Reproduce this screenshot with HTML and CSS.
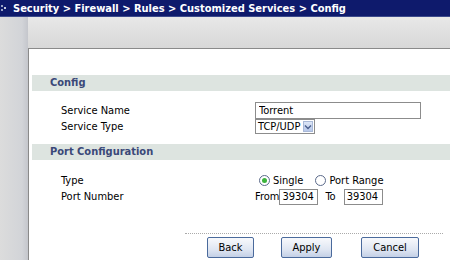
FILE: index.html
```html
<!DOCTYPE html>
<html lang="en">
<head>
  <title>Customized Services - Config</title>
  <meta charset="UTF-8">
  <link rel="stylesheet" href="styles.css">
</head>
<body>
  <div class="topbar">
    <svg class="crumb-icon" width="8" height="10" viewBox="0 0 8 10">
      <rect x="1" y="2" width="2" height="2" fill="#9aa3c8"/>
      <rect x="4" y="4" width="2" height="2" fill="#c9cde0"/>
      <rect x="1" y="6" width="2" height="2" fill="#9aa3c8"/>
    </svg>
    <span>Security &gt; Firewall &gt; Rules &gt; Customized Services &gt; Config</span>
  </div>

  <div class="frame">
    <div class="panel">
      <div class="band">Config</div>
      <div class="rows">
        <div class="row tall">
          <label>Service Name</label>
          <input type="text" class="text-name" value="Torrent">
        </div>
        <div class="row">
          <label>Service Type</label>
          <div class="select">
            <span>TCP/UDP</span>
            <span class="arrow">
              <svg width="8" height="6" viewBox="0 0 8 6"><path d="M1 1.5 L4 4.5 L7 1.5" fill="none" stroke="#4b5f8c" stroke-width="1.4"/></svg>
            </span>
          </div>
        </div>
      </div>

      <div class="band">Port Configuration</div>
      <div class="rows port">
        <div class="row">
          <label>Type</label>
          <div class="radios">
            <span class="radio on"></span><span class="radio-text">Single</span>
            <span class="radio"></span><span>Port Range</span>
          </div>
        </div>
        <div class="row tall">
          <label>Port Number</label>
          <div class="ports">
            <span>From</span><input type="text" class="port-box" value="39304">
            <span class="to">To</span><input type="text" class="port-box" value="39304">
          </div>
        </div>
      </div>

      <div class="actions">
        <button class="btn back">Back</button>
        <button class="btn apply">Apply</button>
        <button class="btn cancel">Cancel</button>
      </div>
    </div>
  </div>
</body>
</html>
```

FILE: styles.css
```css
body {
  margin: 0;
  font-family: "DejaVu Sans Condensed", "DejaVu Sans", sans-serif;
  font-size: 11px;
  color: #000;
  width: 450px;
  height: 260px;
  overflow: hidden;
}

.topbar {
  height: 16px;
  background: #0e1a6c;
  border-bottom: 1px solid #3c4a8c;
  color: #fff;
  font-weight: bold;
  font-size: 11px;
  display: flex;
  align-items: center;
  white-space: nowrap;
}

.crumb-icon {
  margin: 0 5px 0 0;
}

.frame {
  height: 243px;
  padding: 31px 0 0 28px;
  box-sizing: border-box;
  background:
    linear-gradient(to right, #dcdcdc 0, #d2d4d8 22px, #c4c6cc 28px, transparent 28px),
    linear-gradient(to bottom, #e8e8e8, #d8d8d8 30px);
}

.panel {
  background: #fff;
  border-top: 1px solid #8a8a8a;
  border-left: 1px solid #8a8a8a;
  height: 100%;
  padding-top: 26px;
  box-sizing: border-box;
}

.band {
  margin-left: 3px;
  height: 16px;
  line-height: 16px;
  background: #dde4e0;
  color: #3a4878;
  font-weight: bold;
  padding-left: 18px;
}

.rows {
  padding: 11px 0 10px 32px;
}

.rows.port {
  padding-top: 13px;
  padding-bottom: 0;
}

.row {
  display: grid;
  grid-template-columns: 194px auto;
  align-items: center;
  height: 15px;
}

.row.tall {
  height: 17px;
}

.text-name {
  width: 166px;
  height: 17px;
  box-sizing: border-box;
  border: 1px solid #8c8c8c;
  padding: 0 3px;
  font: inherit;
  margin: 0;
}

.select {
  display: flex;
  align-items: center;
  width: 60px;
  height: 15px;
  box-sizing: border-box;
  border: 1px solid #8c8c8c;
  padding-left: 2px;
  justify-content: space-between;
}

.select .arrow {
  width: 10px;
  height: 11px;
  margin-right: 1px;
  background: linear-gradient(#dde6f6, #b7c8ea);
  border: 1px solid #a9b9d8;
  box-sizing: border-box;
  display: flex;
  align-items: center;
  justify-content: center;
}

.radios {
  display: flex;
  align-items: center;
  padding-left: 4px;
}

.radio {
  width: 9px;
  height: 9px;
  border: 1px solid #5b6a8a;
  border-radius: 50%;
  background: #fff;
  margin-right: 3px;
  position: relative;
}

.radio.on::after {
  content: "";
  position: absolute;
  left: 2px;
  top: 2px;
  width: 5px;
  height: 5px;
  border-radius: 50%;
  background: #3cb43c;
}

.radio-text {
  margin-right: 12px;
}

.ports {
  display: flex;
  align-items: center;
}

.port-box {
  width: 39px;
  height: 16px;
  box-sizing: border-box;
  border: 1px solid #8c8c8c;
  padding: 0 2px;
  font: inherit;
  margin: 0;
}

.to {
  margin: 0 8px 0 7px;
}

.actions {
  margin: 28px 7px 0 156px;
  border-top: 1px dotted #aaa;
  padding: 3px 0 0 22px;
  display: flex;
}

.btn {
  height: 21px;
  font: inherit;
  color: #000;
  border: 1px solid #4a6a9c;
  border-radius: 2px;
  background: linear-gradient(#f8f9fc, #dfe6f2 60%, #c4d0e6);
  padding: 0;
}

.back {
  width: 47px;
}

.apply {
  width: 51px;
  margin-left: 27px;
}

.cancel {
  width: 58px;
  margin-left: 29px;
}
```
